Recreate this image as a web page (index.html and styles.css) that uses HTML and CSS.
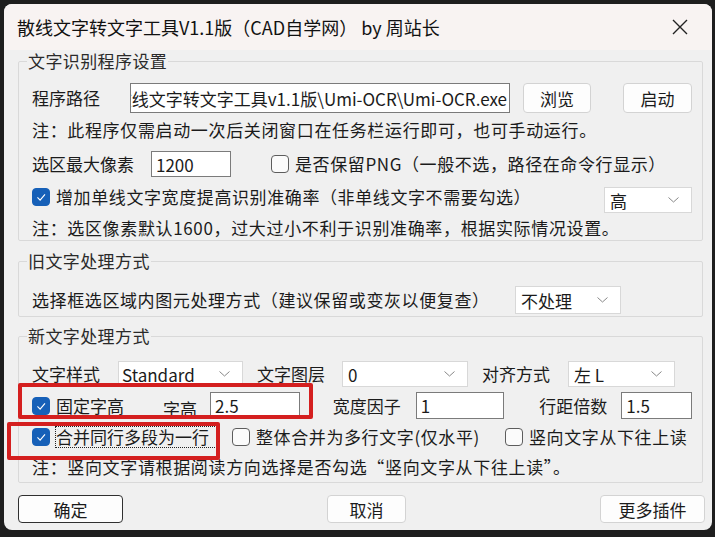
FILE: index.html
```html
<!DOCTYPE html>
<html lang="zh-CN">
<head>
    <meta charset="UTF-8">
    <title>散线文字转文字工具V1.1版</title>
    <link rel="stylesheet" href="styles.css">
</head>
<body>
    <div class="window">
        <!-- Title bar -->
        <div class="titlebar">
            <span class="title">散线文字转文字工具V1.1版（CAD自学网） by 周站长</span>
            <svg class="close" width="16" height="16" viewBox="0 0 16 16">
                <path d="M1 1 L15 15 M15 1 L1 15" stroke="#222" stroke-width="1.4" fill="none"/>
            </svg>
        </div>

        <div class="content">
            <!-- Group 1 -->
            <fieldset class="group g1">
                <legend>文字识别程序设置</legend>
                <div class="row r-path">
                    <span class="label">程序路径</span>
                    <div class="field path"><span>散线文字转文字工具v1.1版\Umi-OCR\Umi-OCR.exe</span></div>
                    <div class="btn browse">浏览</div>
                    <div class="btn run">启动</div>
                </div>
                <div class="note n1">注：此程序仅需启动一次后关闭窗口在任务栏运行即可，也可手动运行。</div>
                <div class="row r-px">
                    <span class="label">选区最大像素</span>
                    <div class="field px">1200</div>
                    <label class="check keep wide"><span class="box"></span>是否保留PNG（一般不选，路径在命令行显示）</label>
                </div>
                <div class="row r-width">
                    <label class="check wide"><span class="box on"><svg viewBox="0 0 18 18"><path d="M5 9.5 L8 12.5 L13.5 6" stroke="#fff" stroke-width="1.3" fill="none"/></svg></span>增加单线文字宽度提高识别准确率（非单线文字不需要勾选）</label>
                    <div class="select level"><span>高</span><svg width="11" height="6" viewBox="0 0 11 6"><path d="M0.5 0.5 L5.5 5 L10.5 0.5" stroke="#888" fill="none"/></svg></div>
                </div>
                <div class="note n2">注：选区像素默认1600，过大过小不利于识别准确率，根据实际情况设置。</div>
            </fieldset>

            <!-- Group 2 -->
            <fieldset class="group g2">
                <legend>旧文字处理方式</legend>
                <div class="row r-old">
                    <span class="label old-label wide">选择框选区域内图元处理方式（建议保留或变灰以便复查）</span>
                    <div class="select old"><span>不处理</span><svg width="11" height="6" viewBox="0 0 11 6"><path d="M0.5 0.5 L5.5 5 L10.5 0.5" stroke="#888" fill="none"/></svg></div>
                </div>
            </fieldset>

            <!-- Group 3 -->
            <fieldset class="group g3">
                <legend>新文字处理方式</legend>
                <div class="row r-style">
                    <span class="label">文字样式</span>
                    <div class="select style"><span>Standard</span><svg width="11" height="6" viewBox="0 0 11 6"><path d="M0.5 0.5 L5.5 5 L10.5 0.5" stroke="#888" fill="none"/></svg></div>
                    <span class="label lay-label">文字图层</span>
                    <div class="select layer"><span>0</span><svg width="11" height="6" viewBox="0 0 11 6"><path d="M0.5 0.5 L5.5 5 L10.5 0.5" stroke="#888" fill="none"/></svg></div>
                    <span class="label align-label">对齐方式</span>
                    <div class="select align"><span>左 L</span><svg width="11" height="6" viewBox="0 0 11 6"><path d="M0.5 0.5 L5.5 5 L10.5 0.5" stroke="#888" fill="none"/></svg></div>
                </div>
                <div class="row r-height">
                    <label class="check fixed"><span class="box on"><svg viewBox="0 0 18 18"><path d="M5 9.5 L8 12.5 L13.5 6" stroke="#fff" stroke-width="1.3" fill="none"/></svg></span>固定字高</label>
                    <span class="label h-label">字高</span>
                    <div class="field h-val">2.5</div>
                    <span class="label w-label">宽度因子</span>
                    <div class="field w-val">1</div>
                    <span class="label s-label">行距倍数</span>
                    <div class="field s-val">1.5</div>
                </div>
                <div class="row r-merge">
                    <label class="check merge"><span class="box on"><svg viewBox="0 0 18 18"><path d="M5 9.5 L8 12.5 L13.5 6" stroke="#fff" stroke-width="1.3" fill="none"/></svg></span><span class="focus">合并同行多段为一行</span></label>
                    <label class="check whole wide"><span class="box"></span>整体合并为多行文字(仅水平)</label>
                    <label class="check vert wide"><span class="box"></span>竖向文字从下往上读</label>
                </div>
                <div class="note n3">注：竖向文字请根据阅读方向选择是否勾选“竖向文字从下往上读”。</div>
            </fieldset>

            <!-- Buttons -->
            <div class="actions">
                <div class="btn ok">确定</div>
                <div class="btn cancel">取消</div>
                <div class="btn more">更多插件</div>
            </div>
        </div>

        <!-- red highlight marks -->
        <div class="mark mark1"></div>
        <div class="mark mark2"></div>
    </div>
</body>
</html>
```

FILE: styles.css
```css
body {
    margin: 0;
    width: 715px;
    height: 537px;
    background-color: #1e1e1e;
    font-family: "Noto Sans CJK SC", "Noto Sans", sans-serif;
    color: #1b1b1b;
    overflow: hidden;
}

.window {
    position: relative;
    margin: 4px 0 0 4px;
    width: 708px;
    height: 526px;
    border-radius: 8px;
    background-color: #f0f0f0;
    overflow: hidden;
}

.titlebar {
    height: 46px;
    display: flex;
    align-items: center;
    justify-content: space-between;
    padding: 0 24px 0 13px;
    background-color: #f8f3f2;
}

.title {
    font-size: 18px;
    color: #111;
}

.content {
    padding: 0 9px 0 14px;
}

.group {
    margin: 0;
    padding: 0 10px 0 8px;
    border: 1px solid #d9d9d9;
    border-radius: 2px;
    min-width: 0;
}

.group legend {
    padding: 0 1px;
    font-size: 17px;
    line-height: 20px;
    color: #2a2a2a;
    letter-spacing: 0.4px;
}

.g1 { margin-top: 1px; padding-top: 12px; padding-bottom: 1px; }
.g2 { margin-top: 10px; padding-top: 15px; padding-bottom: 2px; }
.g3 { margin-top: 9px; padding-top: 15px; padding-bottom: 4px; }

.row {
    display: flex;
    align-items: center;
    margin-left: 5px;
    font-size: 17px;
    white-space: nowrap;
}

.label {
    line-height: 20px;
}

.wide {
    letter-spacing: 0.6px;
}

.note {
    margin-left: 5px;
    height: 22px;
    line-height: 22px;
    font-size: 17px;
    letter-spacing: 0.65px;
    white-space: nowrap;
}

/* text fields */
.field {
    height: 100%;
    box-sizing: border-box;
    background: #fff;
    border: 1px solid #7b7b7b;
    display: flex;
    align-items: center;
    padding: 0 4px;
    font-size: 17px;
    overflow: hidden;
}

/* combo boxes */
.select {
    height: 100%;
    box-sizing: border-box;
    background: #fff;
    border: 1px solid #d8d8d8;
    display: flex;
    align-items: center;
    justify-content: space-between;
    padding: 0 12px 0 5px;
    font-size: 17px;
}

.btn {
    box-sizing: border-box;
    height: 100%;
    background: #fdfdfd;
    border: 1px solid #d3d3d3;
    border-radius: 4px;
    display: flex;
    align-items: center;
    justify-content: center;
    font-size: 17px;
}

.check {
    display: flex;
    align-items: center;
    line-height: 20px;
}

.box {
    width: 18px;
    height: 18px;
    box-sizing: border-box;
    border: 1px solid #5d5d5d;
    border-radius: 4px;
    background: #fbfbfb;
    margin-right: 6px;
    flex: none;
}

.box.on {
    background: #1660b8;
    border-color: #1660b8;
}

.box svg {
    display: block;
    width: 16px;
    height: 16px;
}

.focus {
    outline: 1px dotted #222;
    outline-offset: 0;
    padding-right: 7px;
}

/* group 1 */
.r-path { height: 30px; }
.path { margin-left: 30px; width: 380px; justify-content: flex-end; padding: 0 2px; }
.path span { white-space: nowrap; }
.browse { margin-left: 13px; width: 68px; }
.run { margin-left: 32px; width: 69px; }
.n1 { margin-top: 6px; }
.r-px { height: 30px; margin-top: 8px; }
.px { margin-left: 17px; width: 80px; height: 26px; }
.keep { margin-left: 40px; }
.r-width { height: 26px; margin-top: 5px; }
.level { margin-left: auto; width: 88px; height: 26px; position: relative; top: 3px; }
.n2 { margin-top: 7px; }

/* group 2 */
.r-old { height: 28px; }
.old-label { width: 483px; }
.old { width: 106px; }

/* group 3 */
.r-style { height: 26px; }
.style { margin-left: 18px; width: 125px; padding-left: 3px; }
.lay-label { margin-left: 14px; }
.layer { margin-left: 17px; width: 126px; }
.align-label { margin-left: 14px; }
.align { margin-left: 18px; width: 107px; }

.r-height { height: 27px; margin-top: 5px; }
.h-label { margin-left: 39px; position: relative; top: 3px; }
.h-val { margin-left: 13px; width: 90px; }
.w-label { margin-left: 33px; }
.w-val { margin-left: 15px; width: 89px; }
.s-label { margin-left: 35px; }
.s-val { margin-left: 14px; width: 71px; }

.r-merge { height: 22px; margin-top: 7px; }
.merge { width: 200px; }
.whole { width: 273px; }
.n3 { margin-top: 8px; }

/* bottom buttons */
.actions {
    display: flex;
    height: 28px;
    margin-top: 12px;
    margin-right: -2px;
}

.ok { width: 105px; border-color: #303030; }
.cancel { width: 79px; margin-left: 204px; }
.more { width: 105px; margin-left: auto; }

/* red marks */
.mark {
    position: absolute;
    border: 4px solid #d41f1f;
    border-radius: 2px;
}

.mark1 { left: 14px; top: 379px; width: 287px; height: 28px; }
.mark2 { left: 3px; top: 418px; width: 205px; height: 30px; }
```
